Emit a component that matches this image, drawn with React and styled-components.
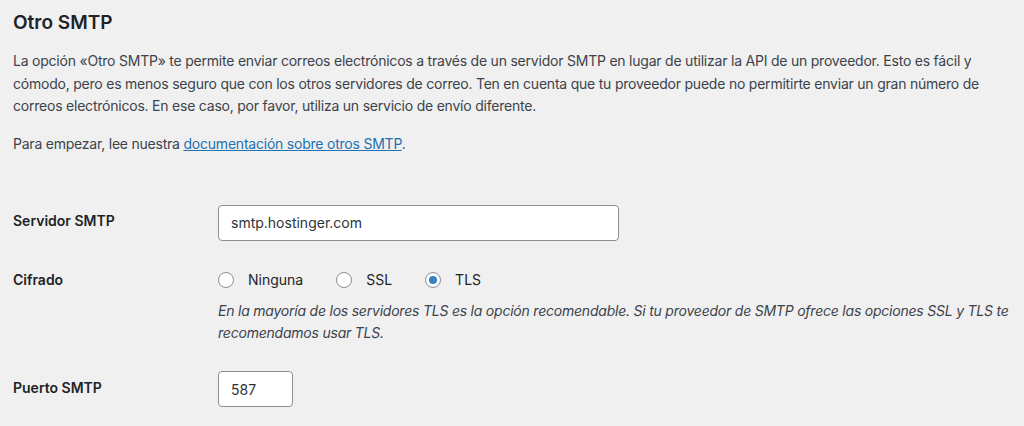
import React from "react";
import styled, { createGlobalStyle } from "styled-components";

const Global = createGlobalStyle`
  html, body { margin: 0; padding: 0; background: #f0f0f1; }
  body { font-family: Inter, "Noto Sans", sans-serif; color: #3c434a; letter-spacing: -0.22px; }
`;

const Page = styled.div`
  padding: 5px 13px 0 13px;
`;

const Title = styled.h2`
  margin: 0;
  font-size: 19px;
  line-height: 36px;
  font-weight: 600;
  color: #1d2327;
  letter-spacing: 0;
`;

const Para = styled.p`
  margin: ${(p) => p.$mt || 0}px 0 0 0;
  font-size: 14px;
  line-height: 22.5px;
  color: #3c434a;
`;

const Link = styled.a`
  color: #2271b1;
  text-decoration: underline;
`;

const Form = styled.div`
  display: flex;
  flex-direction: column;
  margin-top: ${(p) => p.$mt}px;
`;

const Row = styled.div`
  display: flex;
  align-items: flex-start;
  margin-top: ${(p) => p.$mt || 0}px;
`;

const Label = styled.div`
  width: 205px;
  flex: none;
  font-size: 14px;
  line-height: 20px;
  font-weight: 600;
  color: #1d2327;
  letter-spacing: 0;
  padding-top: ${(p) => p.$pt || 0}px;
`;

const Field = styled.div`
  display: flex;
  flex-direction: column;
  min-width: 0;
`;

const TextInput = styled.div`
  box-sizing: border-box;
  width: ${(p) => p.$w}px;
  height: 36px;
  background: #fff;
  border: 1px solid #8c8f94;
  border-radius: 4px;
  padding: 0 12px;
  display: flex;
  align-items: center;
  font-size: 14px;
  color: #2c3338;
  letter-spacing: 0;
`;

const Radios = styled.div`
  display: flex;
  align-items: center;
  height: 20px;
`;

const RadioItem = styled.label`
  display: flex;
  align-items: center;
  font-size: 14px;
  line-height: 20px;
  color: #1d2327;
  letter-spacing: 0;
  margin-right: 33px;
`;

const Circle = styled.span`
  box-sizing: border-box;
  width: 16px;
  height: 16px;
  border-radius: 50%;
  border: 1px solid #8c8f94;
  background: #fff;
  margin-right: 14px;
  display: flex;
  align-items: center;
  justify-content: center;
  &::after {
    content: "";
    display: ${(p) => (p.$checked ? "block" : "none")};
    width: 8px;
    height: 8px;
    border-radius: 50%;
    background: #3582c4;
  }
`;

const Desc = styled.p`
  margin: 9.5px 0 0 0;
  font-size: 14px;
  line-height: 22px;
  font-style: italic;
  color: #3c434a;
`;

export default function App() {
  return (
    <>
      <Global />
      <Page>
        <Title>Otro SMTP</Title>
        <Para $mt={9}>
          La opción «Otro SMTP» te permite enviar correos electrónicos a través de un servidor SMTP en lugar de utilizar la API de un proveedor. Esto es fácil y cómodo, pero es menos seguro que con los otros servidores de correo. Ten en cuenta que tu proveedor puede no permitirte enviar un gran número de correos electrónicos. En ese caso, por favor, utiliza un servicio de envío diferente.
        </Para>
        <Para $mt={15}>
          Para empezar, lee nuestra <Link href="#">documentación sobre otros SMTP</Link>.
        </Para>
        <Form $mt={49.5}>
          <Row>
            <Label $pt={6.5}>Servidor SMTP</Label>
            <Field>
              <TextInput $w={401}>smtp.hostinger.com</TextInput>
            </Field>
          </Row>
          <Row $mt={29.5}>
            <Label>Cifrado</Label>
            <Field>
              <Radios>
                <RadioItem><Circle />Ninguna</RadioItem>
                <RadioItem><Circle />SSL</RadioItem>
                <RadioItem><Circle $checked />TLS</RadioItem>
              </Radios>
              <Desc>
                En la mayoría de los servidores TLS es la opción recomendable. Si tu proveedor de SMTP ofrece las opciones SSL y TLS te recomendamos usar TLS.
              </Desc>
            </Field>
          </Row>
          <Row $mt={27.5}>
            <Label $pt={7}>Puerto SMTP</Label>
            <Field>
              <TextInput $w={75}>587</TextInput>
            </Field>
          </Row>
        </Form>
      </Page>
    </>
  );
}
